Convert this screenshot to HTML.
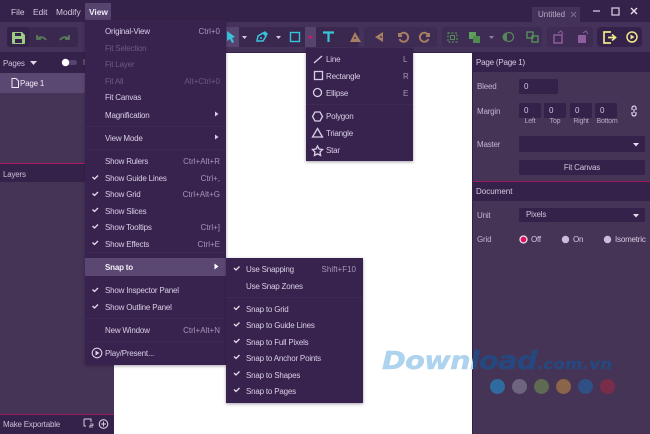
<!DOCTYPE html>
<html><head><meta charset="utf-8"><style>
*{box-sizing:border-box}
html,body{margin:0;padding:0}
body{width:650px;height:434px;overflow:hidden;position:relative;background:#fff;font-family:"Liberation Sans",sans-serif;font-size:8px;letter-spacing:-.2px;color:#d9cfe6}
#r{position:absolute;left:0;top:0;width:650px;height:434px;overflow:hidden;filter:blur(.3px)}
.a{position:absolute}
.t{position:absolute;white-space:nowrap;line-height:12px;height:12px;margin-top:1px}
.s{position:absolute;white-space:nowrap;line-height:12px;height:12px;margin-top:1px;text-align:right;color:#a596b8;letter-spacing:0}
.top{margin-top:0;font-size:8.4px;letter-spacing:0}
.dis{color:#6b5a80}
.d{background:#35224a}
.in{position:absolute;background:#35224a;color:#cfc5dc;padding-left:5px;line-height:15px;border-radius:1px}
.lb{position:absolute;color:#b5a8c6;font-size:7px;line-height:10px;text-align:center}
.wm{position:absolute;top:0;font:italic bold 25px/30px 'DejaVu Sans',sans-serif;white-space:nowrap;letter-spacing:-.6px;transform:scaleX(1.15);transform-origin:0 0;-webkit-text-stroke:.4px currentColor}
.wm span{font-size:14.5px;letter-spacing:.2px}
svg{position:absolute;overflow:visible}
</style></head><body><div id="r">
<!-- chrome -->
<div class="a" style="left:0;top:0;width:650px;height:23px;background:#35224a"></div>
<div class="a" style="left:0;top:22px;width:650px;height:31px;background:#44325a"></div>
<div class="a" style="left:0;top:52px;width:650px;height:1px;background:#35224a"></div>
<div class="t top" style="left:11px;top:6px;color:#d5cbe2">File</div>
<div class="t top" style="left:33px;top:6px;color:#d5cbe2">Edit</div>
<div class="t top" style="left:56px;top:6px;color:#d5cbe2">Modify</div>
<div class="a" style="left:85px;top:3px;width:26px;height:17px;background:#56446f"></div>
<div class="t top" style="left:89px;top:6px;color:#f0eaf6;font-weight:bold">View</div>
<div class="a" style="left:532px;top:7px;width:48px;height:16px;background:#44325a"></div>
<div class="t" style="left:538px;top:8px;color:#b8abc9;letter-spacing:0">Untitled</div>
<svg style="left:0;top:0" width="650" height="53" fill="none">
<path d="M571 12l5 5m0-5l-5 5" stroke="#7d6d92"/>
<path d="M593 11h7" stroke="#d0c7dc" stroke-width="1.3"/>
<rect x="612" y="8" width="7" height="7" stroke="#d0c7dc" stroke-width="1.3"/>
<path d="M631 8l6 6m0-6l-6 6" stroke="#e6e0ee" stroke-width="1.4"/>
<!-- groups -->
<rect x="7" y="27" width="71" height="20" rx="3" fill="#3b284f"/>
<rect x="7" y="27" width="22" height="20" rx="3" fill="#35224a"/>
<rect x="226" y="27" width="133" height="20" rx="3" fill="#3b284f"/>
<rect x="226" y="27" width="13" height="20" fill="#56446f"/>
<rect x="305" y="27" width="11" height="20" fill="#56446f"/>
<rect x="364" y="27" width="73" height="20" rx="3" fill="#3f2c55"/>
<rect x="442" y="27" width="100" height="20" rx="3" fill="#3f2c55"/>
<rect x="547" y="27" width="46" height="20" rx="3" fill="#3f2c55"/>
<rect x="597" y="27" width="45" height="20" rx="4" fill="#35224a"/>
<!-- save -->
<path d="M13 32h9l3 3v8a1 1 0 0 1-1 1H13a1 1 0 0 1-1-1V33a1 1 0 0 1 1-1z" fill="#9ccb85"/>
<rect x="15" y="33" width="6" height="3" fill="#35224a"/><rect x="15" y="39" width="7" height="4" fill="#35224a"/>
<path d="M37 35v4h4m-4 0c3-3 7-2 9 1" stroke="#587a5c" stroke-width="1.800"/>
<path d="M69 35v4h-4m4 0c-3-3-7-2-9 1" stroke="#587a5c" stroke-width="1.800"/>
<!-- tools -->
<path d="M227 31l8 6-3 1 2 4-2 1-2-4-3 2z" fill="#3ac4dc"/>
<path d="M242 36h5l-2.500 3z" fill="#d6cce2"/>
<path d="M257 41l1-5 5-3 3 3-3 5z" stroke="#3ac4dc" stroke-width="1.500"/><circle cx="261" cy="38" r="1" fill="#3ac4dc"/><path d="M263 33l2-2 3 3-2 2" fill="#3ac4dc"/>
<path d="M276 36h5l-2.500 3z" fill="#d6cce2"/>
<rect x="290.500" y="32.500" width="9" height="9" stroke="#3ac4dc" stroke-width="1.400"/>
<path d="M308 36h5l-2.500 3z" fill="#e0155f"/>
<path d="M323 32.500h11M328.500 32.500V42" stroke="#3ac4dc" stroke-width="2.200"/>
<path d="M355 32l6 10h-11z" fill="#a87f62"/><path d="M355 37v2" stroke="#44325a" stroke-width="1.500"/>
<path d="M383 32v10l-8-5z" fill="#a87f62"/><path d="M380 37h2" stroke="#44325a" stroke-width="1.500"/>
<path d="M399 33l0 3 3 0M399.500 35.500a4.500 4.500 0 1 1 0 3.500" stroke="#a87f62" stroke-width="1.900"/>
<path d="M429 33l0 3-3 0M428.500 35.500a4.500 4.500 0 1 0 0 3.500" stroke="#a87f62" stroke-width="1.900"/>
<!-- green -->
<rect x="448" y="33" width="9" height="9" stroke="#558a58" stroke-dasharray="2 1.500" stroke-width="1.200"/><rect x="450.500" y="35.500" width="4" height="4" stroke="#558a58"/>
<rect x="469" y="32" width="7" height="7" fill="#5da05e"/><rect x="473" y="36" width="7" height="7" fill="#4e8a52"/>
<path d="M489 36h5l-2.500 3z" fill="#8f80a3"/>
<circle cx="509" cy="37" r="4.500" stroke="#558a58" stroke-width="1.200"/><path d="M507 32.500a4.500 4.500 0 0 0 0 9z" fill="#558a58"/>
<rect x="527" y="32" width="6" height="6" stroke="#558a58" stroke-width="1.500"/><rect x="532" y="36" width="6" height="6" stroke="#558a58" stroke-width="1.500"/>
<!-- purple -->
<rect x="554" y="35" width="8" height="8" stroke="#8d5d9d" stroke-width="1.500"/><path d="M558 33l3-2 2 3" stroke="#8d5d9d"/>
<rect x="578" y="35" width="8" height="8" fill="#8d5d9d"/><path d="M583 33l3-2 2 3" stroke="#8d5d9d"/>
<!-- yellow -->
<path d="M611 32h-7v11h7M608 37.500h7m-3-3l3.500 3-3.500 3" stroke="#efe78a" stroke-width="1.700"/>
<circle cx="632" cy="37" r="5" stroke="#efe78a" stroke-width="1.500"/><path d="M630.500 34.500l4 2.500-4 2.500z" fill="#efe78a"/>
</svg>
<!-- left panel -->
<div class="a" style="left:0;top:53px;width:114px;height:381px;background:#453455"></div>
<div class="a d" style="left:0;top:53px;width:114px;height:20px"></div>
<div class="t" style="left:3px;top:57px;color:#c8bdd6">Pages</div>
<svg style="left:0;top:53px" width="114" height="20"><path d="M30 8h7l-3.500 4z" fill="#e0d8ea"/><rect x="62" y="7" width="15" height="5" rx="2.500" fill="#56446f"/><circle cx="65.500" cy="9.500" r="3.700" fill="#fff"/><path d="M84 6v6" stroke="#8a7a9e"/></svg>
<div class="a" style="left:0;top:73px;width:114px;height:20px;background:#5a4872"></div>
<svg style="left:11px;top:78px" width="8" height="10" fill="none"><path d="M1 .5h4l2.500 2.500v6.500h-6.500z" stroke="#efeaf4"/></svg>
<div class="t" style="left:20px;top:77px;color:#efeaf4">Page 1</div>
<div class="a" style="left:0;top:163px;width:114px;height:1px;background:#b01a60"></div>
<div class="a d" style="left:0;top:164px;width:114px;height:18px"></div>
<div class="t" style="left:3px;top:168px;color:#c8bdd6">Layers</div>
<div class="a" style="left:0;top:414px;width:114px;height:1px;background:#9a1a5c"></div>
<div class="a d" style="left:0;top:415px;width:114px;height:19px"></div>
<div class="t" style="left:3px;top:418px;color:#c8bdd6">Make Exportable</div>
<svg style="left:80px;top:417px" width="34" height="15" fill="none"><path d="M4 2h7v3M4 2v7h2" stroke="#d5cce0"/><path d="M9 10h4M10 7h3v1.500h-3v1.500" stroke="#d5cce0" stroke-width=".8"/><circle cx="23.500" cy="7" r="4.300" stroke="#d5cce0" stroke-width="1.100"/><path d="M21 7h5M23.500 4.500v5" stroke="#d5cce0"/></svg>
<!-- right panel -->
<div class="a" style="left:472px;top:53px;width:178px;height:381px;background:#453455;border-left:1px solid #33204a"></div>
<div class="a d" style="left:473px;top:53px;width:177px;height:19px"></div>
<div class="t" style="left:476px;top:56px;color:#d5cbe2">Page (Page 1)</div>
<div class="t" style="left:477px;top:80px;color:#c0b3d0">Bleed</div>
<div class="in" style="left:519px;top:79px;width:39px;height:15px">0</div>
<div class="t" style="left:477px;top:105px;color:#c0b3d0">Margin</div>
<div class="in" style="left:519px;top:103px;width:22px;height:15px">0</div>
<div class="in" style="left:544px;top:103px;width:22px;height:15px">0</div>
<div class="in" style="left:570px;top:103px;width:22px;height:15px">0</div>
<div class="in" style="left:595px;top:103px;width:22px;height:15px">0</div>
<div class="lb" style="left:519px;top:117px;width:22px">Left</div>
<div class="lb" style="left:544px;top:117px;width:22px">Top</div>
<div class="lb" style="left:570px;top:117px;width:22px">Right</div>
<div class="lb" style="left:594px;top:117px;width:26px">Bottom</div>
<svg style="left:629px;top:105px" width="10" height="12" fill="none"><path d="M3 5V3a2 2 0 0 1 4 0v2M3 7v2a2 2 0 0 0 4 0V7M5 4v4" stroke="#e0d8ea" stroke-width="1.200"/></svg>
<div class="t" style="left:477px;top:138px;color:#c0b3d0">Master</div>
<div class="in" style="left:519px;top:136px;width:126px;height:16px"></div>
<div class="in" style="left:519px;top:160px;width:126px;height:15px;padding:0;text-align:center">Fit Canvas</div>
<div class="a" style="left:473px;top:181px;width:177px;height:1px;background:#9a1a5c"></div>
<div class="a d" style="left:473px;top:182px;width:177px;height:19px"></div>
<div class="t" style="left:476px;top:185px;color:#d5cbe2;letter-spacing:0">Document</div>
<div class="t" style="left:477px;top:209px;color:#c0b3d0">Unit</div>
<div class="in" style="left:519px;top:208px;width:126px;height:14px;padding-left:7px;line-height:14px">Pixels</div>
<svg style="left:473px;top:130px" width="177" height="100"><path d="M160 13h6l-3 3.500z" fill="#e6dff0"/><path d="M160 84h6l-3 3.500z" fill="#e6dff0"/></svg>
<div class="t" style="left:477px;top:233px;color:#c0b3d0">Grid</div>
<svg style="left:473px;top:230px" width="177" height="20"><circle cx="50.500" cy="9.500" r="3.500" fill="#e0105c" stroke="#e8e0f0" stroke-width="1.300"/><circle cx="92.500" cy="9.500" r="3.700" fill="#c9bcdc"/><circle cx="134.500" cy="9.500" r="3.700" fill="#c9bcdc"/></svg>
<div class="t" style="left:531px;top:233px;color:#d5cbe2">Off</div>
<div class="t" style="left:573px;top:233px;color:#d5cbe2">On</div>
<div class="t" style="left:615px;top:233px;color:#d5cbe2">Isometric</div>
<!-- watermark -->
<div class="a" style="left:380px;top:346px;width:93px;height:30px;overflow:hidden"><div class="wm" style="left:2px;color:#aed3ee">Download<span>.com.vn</span></div></div>
<div class="a" style="left:473px;top:346px;width:177px;height:30px;overflow:hidden"><div class="wm" style="left:-91px;color:#27487f">Download<span>.com.vn</span></div></div>
<svg style="left:0;top:0" width="650" height="434"><circle cx="497.500" cy="386.500" r="7.500" fill="#2f6b9e"/><circle cx="519.500" cy="386.500" r="7.500" fill="#6e6480"/><circle cx="541.500" cy="386.500" r="7.500" fill="#5e6b52"/><circle cx="563.500" cy="386.500" r="7.500" fill="#8a6549"/><circle cx="585.500" cy="386.500" r="7.500" fill="#2f4f85"/><circle cx="607.500" cy="386.500" r="7.500" fill="#7a2d4a"/></svg>
<!-- view menu -->
<div class="a" style="left:85px;top:20px;width:141px;height:345px;background:#38234e;box-shadow:0 1px 3px rgba(30,15,40,.4)"></div>
<div class="a" style="left:85px;top:258px;width:141px;height:18px;background:#5a4872"></div>
<div class="t" style="left:105px;top:25px">Original-View</div><div class="s" style="right:430px;top:25px">Ctrl+0</div>
<div class="t dis" style="left:105px;top:42px">Fit Selection</div>
<div class="t dis" style="left:105px;top:58px">Fit Layer</div>
<div class="t dis" style="left:105px;top:75px">Fit All</div><div class="s dis" style="right:430px;top:75px;color:#6b5a80">Alt+Ctrl+0</div>
<div class="t" style="left:105px;top:91px">Fit Canvas</div>
<div class="t" style="left:105px;top:109px">Magnification</div>
<div class="t" style="left:105px;top:132px">View Mode</div>
<div class="t" style="left:105px;top:155px">Show Rulers</div><div class="s" style="right:430px;top:155px">Ctrl+Alt+R</div>
<div class="t" style="left:105px;top:172px">Show Guide Lines</div><div class="s" style="right:430px;top:172px">Ctrl+,</div>
<div class="t" style="left:105px;top:188px">Show Grid</div><div class="s" style="right:430px;top:188px">Ctrl+Alt+G</div>
<div class="t" style="left:105px;top:205px">Show Slices</div>
<div class="t" style="left:105px;top:221px">Show Tooltips</div><div class="s" style="right:430px;top:221px">Ctrl+]</div>
<div class="t" style="left:105px;top:238px">Show Effects</div><div class="s" style="right:430px;top:238px">Ctrl+E</div>
<div class="t" style="left:105px;top:261px;color:#f2eef6;font-weight:bold">Snap to</div>
<div class="t" style="left:105px;top:284px">Show Inspector Panel</div>
<div class="t" style="left:105px;top:301px">Show Outline Panel</div>
<div class="t" style="left:105px;top:324px">New Window</div><div class="s" style="right:430px;top:324px">Ctrl+Alt+N</div>
<div class="t" style="left:105px;top:347px">Play/Present...</div>
<svg style="left:0;top:0" width="650" height="434" fill="none">
<path d="M85 126.500h141M85 149.500h141M85 252.500h141M85 318.500h141M85 341.500h141" stroke="#40294f"/>
<path d="M215 111.500l3.500 2.500-3.500 2.500z M215 134.500l3.500 2.500-3.500 2.500z" fill="#d9cfe6"/>
<path d="M214.500 263.500l4 3-4 3z" fill="#fff"/>
<g stroke="#e6dff0" stroke-width="1.300"><path d="M92.500 177l2 2 3.500-3.500M92.500 193.500l2 2 3.500-3.500M92.500 209.500l2 2 3.500-3.500M92.500 226l2 2 3.500-3.500M92.500 242.500l2 2 3.500-3.500M92.500 289.500l2 2 3.500-3.500M92.500 306l2 2 3.500-3.500"/></g>
<circle cx="97" cy="353" r="4.800" stroke="#d9cfe6" stroke-width="1.100"/><path d="M95.500 350.500l4 2.500-4 2.500z" fill="#d9cfe6"/>
</svg>
<!-- snap menu -->
<div class="a" style="left:226px;top:258px;width:137px;height:145px;background:#38234e;box-shadow:0 1px 3px rgba(30,15,40,.4)"></div>
<div class="t" style="left:246px;top:263px">Use Snapping</div><div class="s" style="right:294px;top:263px">Shift+F10</div>
<div class="t" style="left:246px;top:280px">Use Snap Zones</div>
<div class="t" style="left:246px;top:303px">Snap to Grid</div>
<div class="t" style="left:246px;top:319px">Snap to Guide Lines</div>
<div class="t" style="left:246px;top:336px">Snap to Full Pixels</div>
<div class="t" style="left:246px;top:352px">Snap to Anchor Points</div>
<div class="t" style="left:246px;top:369px">Snap to Shapes</div>
<div class="t" style="left:246px;top:385px">Snap to Pages</div>
<svg style="left:0;top:0" width="650" height="434" fill="none">
<path d="M226 297.500h137" stroke="#40294f"/>
<g stroke="#e6dff0" stroke-width="1.300"><path d="M234 268l2 2 3.500-3.500M234 307.500l2 2 3.500-3.500M234 324l2 2 3.500-3.500M234 340.500l2 2 3.500-3.500M234 356.500l2 2 3.500-3.500M234 373l2 2 3.500-3.500M234 389.500l2 2 3.500-3.500"/></g>
</svg>
<!-- shape menu -->
<div class="a" style="left:306px;top:48px;width:107px;height:113px;background:#38234e;box-shadow:0 1px 3px rgba(30,15,40,.4)"></div>
<div class="t" style="left:326px;top:53px">Line</div><div class="s" style="left:403px;top:53px;text-align:left">L</div>
<div class="t" style="left:326px;top:70px">Rectangle</div><div class="s" style="left:403px;top:70px;text-align:left">R</div>
<div class="t" style="left:326px;top:87px">Ellipse</div><div class="s" style="left:403px;top:87px;text-align:left">E</div>
<div class="t" style="left:326px;top:110px">Polygon</div>
<div class="t" style="left:326px;top:127px">Triangle</div>
<div class="t" style="left:326px;top:144px">Star</div>
<svg style="left:0;top:0" width="650" height="434" fill="none" stroke="#d9cfe6" stroke-width="1.300">
<path d="M306 104.500h107" stroke="#40294f" stroke-width="1"/>
<path d="M314 63l8-7"/>
<rect x="314.500" y="71.500" width="8" height="8"/>
<circle cx="317.500" cy="92.500" r="4"/>
<path d="M315 112h5l2.500 4.500-2.500 4.500h-5l-2.500-4.500z"/>
<path d="M317.500 128.500l5 8.500h-10z"/>
<path d="M317.500 146l1.500 3 3.500.5-2.500 2.500.6 3.500-3.100-1.600-3.100 1.600.6-3.500-2.500-2.500 3.500-.5z"/>
</svg>
</div></body></html>
